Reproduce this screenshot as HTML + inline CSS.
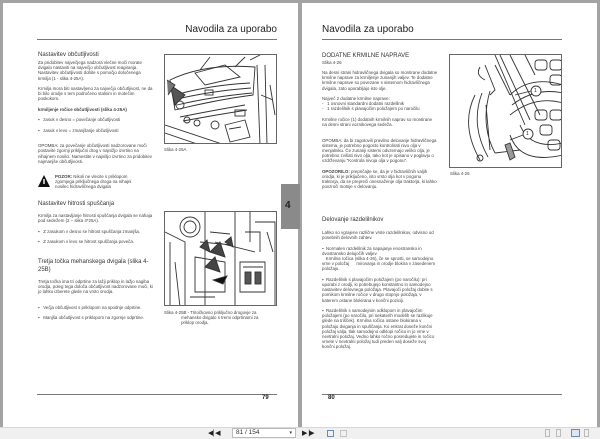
<!DOCTYPE html>
<html><head><meta charset="utf-8"><style>
*{margin:0;padding:0;box-sizing:border-box}
body{width:600px;height:439px;background:#a3a3a3;position:relative;overflow:hidden;font-family:"Liberation Sans",sans-serif;color:#222}
.pg{position:absolute;top:3px;height:424px;background:#fff}
.a{position:absolute}
.h{font-size:10px;color:#222;white-space:nowrap}
.rule{position:absolute;height:1px;background:#777}
.t{position:absolute;font-size:4.4px;line-height:5.2px;color:#444}
.s{position:absolute;font-size:6px;color:#333;white-space:nowrap}
.img{position:absolute;border:1px solid #666;background:#fff;overflow:hidden}
.num{position:absolute;font-size:6px;font-weight:bold}
</style></head><body>
<div class="pg" style="left:3px;width:295px"></div>
<div class="pg" style="left:302px;width:295px"></div>

<!-- left page -->
<div class="a h" style="left:177px;width:100px;text-align:right;top:24px">Navodila za uporabo</div>
<div class="rule" style="left:37px;top:39px;width:240px"></div>
<div class="s" style="left:38px;top:52px">Nastavitev občutljivosti</div>
<div class="t" style="left:38px;top:60px;width:115px">Za pridobitev največjega nadzora vlečne moči morate dvigalo nastaviti na največjo občutljivost reagiranja. Nastavitev občutljivosti dobite s pomočjo določenega krmilja (1 - slika 4-25A).<br><br>Krmilja mora biti nastavljeno za največjo občutljivost, ne da bi bilo orodje s tem področeno stalnim in motečim poskokom.<br><br><b>krmiljenje ročice občutljivosti (slika 4-25A)</b><br><br>▪ &nbsp; zasuk v desno = povečanje občutljivosti<br><br>▪ &nbsp; zasuk v levo = zmanjšanje občutljivosti<br><br><br>OPOMBA: za povečanje občutljivosti nadzorovane moči postavite zgornji priključni drog v najnižjo izvrtino na nihajnem nosilci. Namestite v najvišjo izvrtino za pridobitev najmanjše občutljivosti.</div>
<svg class="a" style="left:37px;top:174px" width="14" height="14"><polygon points="7,1 13,13 1,13" fill="#111"/><rect x="6.3" y="5" width="1.4" height="5" fill="#fff"/></svg>
<div class="t" style="left:55px;top:174px;width:90px"><b>POZOR:</b> Nikoli ne vlecite s priklopom zgornjega priključnega droga na nihajni nosilec hidravličnega dvigala</div>
<div class="s" style="left:38px;top:201px">Nastavitev hitrosti spuščanja</div>
<div class="t" style="left:38px;top:213px;width:115px">Krmilja za nastavljanje hitrosti spuščanja dvigala se nahaja pod sedežem (2 – slika 4*25A).<br><br>▪ &nbsp; Z zasukom v desno se hitrost spuščanja zmanjša.<br><br>▪ &nbsp; Z zasukom v levo se hitrost spuščanja poveča.</div>
<div class="s" style="left:38px;top:258px;width:115px;line-height:8px;white-space:normal">Tretja točka mehanskega dvigala (slika 4-25B)</div>
<div class="t" style="left:38px;top:279px;width:115px">Tretja točka ima tri odprtine za lažji priklop in lažjo nagiba orodja, poleg tega določa občutljivost nadzorovane moči, ki jo lahko izberete glede na vrsto orodja.<br><br><br>▪ &nbsp; Večja občutljivost s priklopom na spodnje odprtine.<br><br>▪ &nbsp; Manjša občutljivost s priklopom na zgornje odprtine.</div>

<div class="img" style="left:164px;top:54px;width:113px;height:90px">
<svg width="113" height="90" viewBox="0 0 113 90" fill="none" stroke="#333" stroke-width="0.9">
<path d="M5 25 Q40 8 90 12 L88 40 Q50 45 10 55 Z"/><path d="M10 40 Q45 30 85 28 M8 45 Q45 36 86 33 M12 50 Q45 42 87 38"/><path d="M15 62 Q50 55 80 50 M18 66 Q50 60 82 55"/><path d="M0 70 L60 90 M0 78 L35 90"/><path d="M92 10 L95 90 M100 10 L102 90 M105 30 L110 60 M96 40 L108 45"/><path d="M60 70 L80 65 L85 82 L65 87 Z M64 74 L76 72"/><circle cx="15" cy="50" r="4"/><circle cx="50" cy="70" r="4"/><circle cx="22" cy="65" r="3"/><circle cx="32" cy="68" r="3"/><path d="M5 30 L20 40 L10 50 Z" fill="#555"/><path d="M30 18 L60 10 L75 22 L40 30 Z M35 15 L45 2 M70 12 L80 2 M85 5 L95 0"/><rect x="40" y="35" width="8" height="5"/><path d="M2 25 L10 30 L3 40" fill="#777"/><rect x="70" y="55" width="10" height="6"/></svg></div>
<div class="t" style="left:164px;top:147px">Slika 4-25A</div>

<div class="img" style="left:164px;top:211px;width:113px;height:95px">
<svg width="113" height="95" viewBox="0 0 113 95" fill="none" stroke="#333" stroke-width="0.9">
<circle cx="25" cy="15" r="10"/><circle cx="25" cy="15" r="6"/><path d="M0 20 L20 30 L20 95 M40 0 L40 95 M70 0 L70 95 M90 10 L110 10 L110 95 M50 30 L90 40 M30 45 L60 50 L60 80 L30 80 Z M75 50 L100 50 L100 80 L75 80 Z M10 50 L15 95 M85 0 L85 30 M45 20 L65 22 M35 30 L68 33 M80 20 L95 20 L95 40 M5 30 L5 95 M25 85 L50 85 M78 55 L98 55 M102 20 L108 40"/><path d="M45 40 L55 30 L60 45 Z M40 55 L50 45 L55 60Z M35 35 L42 28 L45 40Z M60 30 L66 25 L68 35Z" fill="#444"/><path d="M48 68 L62 64 L58 72 Z" fill="#111"/><rect x="80" y="60" width="6" height="12" fill="#555"/><rect x="90" y="60" width="6" height="12" fill="#555"/></svg></div>
<div class="t" style="left:164px;top:310px;width:120px">Slika 4-25B - Tritočkovno priključno drogovje za<br>&nbsp;&nbsp;&nbsp;&nbsp;&nbsp;&nbsp;&nbsp;&nbsp;&nbsp;&nbsp;&nbsp;&nbsp;&nbsp;&nbsp;mehansko dvigalo s tremi odprtinami za<br>&nbsp;&nbsp;&nbsp;&nbsp;&nbsp;&nbsp;&nbsp;&nbsp;&nbsp;&nbsp;&nbsp;&nbsp;&nbsp;&nbsp;priklop orodja.</div>
<div class="rule" style="left:37px;top:394px;width:240px"></div>
<div class="num" style="left:262px;top:395px">79</div>

<div class="a" style="left:281px;top:184px;width:19px;height:45px;background:#8a8a8a"></div>
<div class="a" style="left:285px;top:200px;font-size:10px;font-weight:bold;color:#222">4</div>

<!-- right page -->
<div class="a h" style="left:322px;top:24px">Navodila za uporabo</div>
<div class="rule" style="left:322px;top:39px;width:240px"></div>
<div class="s" style="left:322px;top:53px">DODATNE KRMILNE NAPRAVE</div>
<div class="t" style="left:322px;top:60px">Slika 4-26</div>
<div class="t" style="left:322px;top:70px;width:116px">Na desni strani hidravličnega dvigala so montirane dodatne krmilne naprave za krmiljenje zunanjih valjev. Te dodatne krmilne naprave so povezane s sistemom hidravličnega dvigala, zato uporabljajo isto olje.<br><br>Največ 2 dodatne krmilne naprave:<br>- &nbsp; 1 osnovni standardni dodatni razdelilnik<br>- &nbsp; 1 razdelilnik s plavajočim položajem po naročilu<br><br>Krmilne ročice (1) dodatnih krmilnih naprav so montirane na desni strani voznikovega sedeža.<br><br><br>OPOMBA: da bi zagotovili pravilno delovanje hidravličnega sistema, je potrebno pogosto kontrolirati nivo olja v menjalniku. Če zunanji sistemi odvzemajo veliko olja, je potrebno zvišati nivo olja, tako kot je opisano v poglavju o vzdrževanju "Kontrola nivoja olja v pogonu".<br><br><b>OPOZORILO:</b> prepričajte se, da je v hidravličnih valjih orodja, ki je priključeno, isto vrsto olja kot v pogonu traktorja, da se prepreči onesnaženje olja traktorja, ki lahko povzroči motnje v delovanju.</div>
<div class="s" style="left:322px;top:217px">Delovanje razdelilnikov</div>
<div class="t" style="left:322px;top:230px;width:116px">Lahko so vgrajene različne vrste razdelilnikov, odvisno od posebnih delovnih zahtev.<br><br>▪ &nbsp;Normalen razdelilnik za napajanje enostransko in dvostransko delujočih valjev.<br>&nbsp;&nbsp;&nbsp;Krmilna ročica (slika 4-26), če se sprosti, se samodejno vrne v položaj &nbsp;&nbsp;&nbsp;&nbsp;&nbsp;mirovanja in orodje blokira v zasedenem položaju.<br><br>▪ &nbsp;Razdelilnik s plavajočim položajem (po naročilu): pri uporabi z orodji, ki potrebujejo konstantno in samodejno nastavitev delovnega položaja. Plavajoči položaj dobite s pomikom krmilne ročice v drugo stopnjo položaja, v katerem ostane blokirana v končni poziciji.<br><br>▪ &nbsp;Razdelilnik s samodejnim odklopom in plavajočim položajem (po naročilu, pri nekaterih modelih se razlikuje glede na trišček). Krmilna ročica ostane blokirana v položaju dviganja in spuščanja. Ko enkrat doseže končni položaj valja, tlak samodejno odklopi ročico in jo vrne v nevtralni položaj. Vedno lahko ročno posredujete in ročico vrnete v nevtralni položaj tudi preden valj doseže svoj končni položaj.</div>

<div class="img" style="left:449px;top:54px;width:113px;height:114px">
<svg width="113" height="114" viewBox="0 0 113 114" fill="none" stroke="#333" stroke-width="0.9">
<path d="M25 40 Q10 70 30 105 M32 38 Q20 70 38 102 M40 36 Q30 70 45 98 M36 50 L40 95"/><path d="M35 10 L45 35 L40 40 M45 10 L60 40 M30 12 Q25 20 35 25"/><path d="M45 0 L75 70 M60 0 L90 60 M75 0 L85 20 M50 0 L80 65"/><path d="M60 40 Q80 20 113 30 M60 60 Q85 40 113 48 M62 50 Q85 32 113 38"/><path d="M60 80 Q70 110 113 100 M70 70 Q80 95 113 88 M45 98 L70 95"/><rect x="85" y="5" width="12" height="10" rx="3"/><rect x="100" y="5" width="12" height="10" rx="3"/><rect x="85" y="55" width="12" height="10" rx="3"/><rect x="100" y="55" width="12" height="10" rx="3"/><rect x="90" y="70" width="12" height="10" rx="3"/><rect x="100" y="20" width="12" height="10" rx="3"/><rect x="98" y="85" width="12" height="10" rx="3"/><circle cx="86" cy="36" r="5" fill="#fff"/><circle cx="78" cy="79" r="5" fill="#fff"/><path d="M65 40 L81 36 M60 85 L73 80"/><circle cx="30" cy="103" r="3"/><path d="M55 90 L60 105 L65 102 L60 88Z" fill="#999"/></svg>
<div class="a" style="left:84px;top:33px;font-size:5px">1</div><div class="a" style="left:76px;top:76px;font-size:5px">1</div></div>
<div class="t" style="left:450px;top:171px">Slika 4-26</div>
<div class="rule" style="left:322px;top:394px;width:240px"></div>
<div class="num" style="left:328px;top:395px">80</div>

<!-- toolbar -->
<div class="a" style="left:0;top:427px;width:600px;height:12px;background:#f0f0f0;border-top:1px solid #d8d8d8"></div>
<div class="a" style="left:208px;top:429px;font-size:7px;color:#222;letter-spacing:-1px">◀|&nbsp;&nbsp;◀</div>
<div class="a" style="left:232px;top:428px;width:64px;height:10px;background:#fff;border:1px solid #bbb;font-size:6.5px;line-height:8px;padding-left:3px;color:#333">81 / 154<span style="position:absolute;right:3px;font-size:5px">▾</span></div>
<div class="a" style="left:302px;top:429px;font-size:7px;color:#222;letter-spacing:-1px">▶&nbsp;&nbsp;|▶</div>
<div class="a" style="left:327px;top:430px;width:7px;height:7px;border:1px solid #6a8ab8"></div>
<div class="a" style="left:340px;top:430px;width:7px;height:7px;border:1px solid #c4c4c4"></div>
<div class="a" style="left:545px;top:429px;width:5px;height:8px;border:1px solid #bbb"></div>
<div class="a" style="left:556px;top:429px;width:5px;height:8px;border:1px solid #bbb"></div>
<div class="a" style="left:571px;top:429px;width:9px;height:8px;border:1px solid #6a8ab8;background:#dbe6f5"></div>
<div class="a" style="left:584px;top:429px;width:5px;height:8px;border:1px solid #bbb"></div>
</body></html>
